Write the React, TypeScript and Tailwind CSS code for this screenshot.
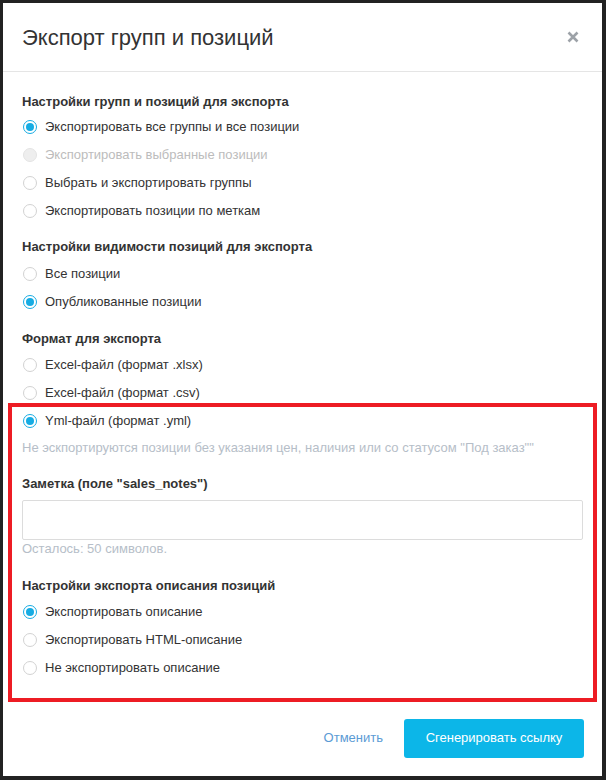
import React from "react";

type RadioProps = { label: string; checked?: boolean; disabled?: boolean };

function Radio({ label, checked, disabled }: RadioProps) {
  return (
    <div className="flex h-[28px] items-center gap-[8px]">
      <span
        className={
          checked
            ? "ml-[1px] flex h-[14px] w-[14px] items-center justify-center rounded-full border-[1.5px] border-[#16ace3] bg-white"
            : disabled
            ? "ml-[1px] h-[14px] w-[14px] rounded-full border border-[#e4e4e4] bg-[#eeeeee]"
            : "ml-[1px] h-[14px] w-[14px] rounded-full border border-[#d2d2d2] bg-white"
        }
      >
        {checked && <span className="h-[8px] w-[8px] rounded-full bg-[#16ace3]" />}
      </span>
      <span className={disabled ? "text-[13px] text-[#bcbcbc]" : "text-[13px] text-[#333333]"}>{label}</span>
    </div>
  );
}

function Heading({ children, className = "" }: { children: React.ReactNode; className?: string }) {
  return (
    <div className={"h-[20px] text-[13px] font-bold leading-[20px] text-[#333333] " + className}>{children}</div>
  );
}

export default function App() {
  return (
    <div
      className="h-[780px] w-[606px] bg-[#222222] pb-[4px] pl-[3px] pr-[4px] pt-[3px]"
      style={{ fontFamily: '"Liberation Sans", Arial, sans-serif' }}
    >
      <div className="flex h-full flex-col bg-white">
        <div className="flex h-[69px] shrink-0 items-center justify-between border-b border-[#e5e5e5] pl-[19px] pr-[23px]">
          <div className="text-[22px] text-[#333333]">Экспорт групп и позиций</div>
          <svg width="12" height="12" viewBox="0 0 12 12">
            <path d="M1.5 1.5 L10.5 10.5 M10.5 1.5 L1.5 10.5" stroke="#9da2a8" strokeWidth="2.6" strokeLinecap="butt" />
          </svg>
        </div>
        <div className="flex flex-col px-[19px] pt-[20px]">
          <Heading className="mb-[1px]">Настройки групп и позиций для экспорта</Heading>
          <Radio label="Экспортировать все группы и все позиции" checked />
          <Radio label="Экспортировать выбранные позиции" disabled />
          <Radio label="Выбрать и экспортировать группы" />
          <Radio label="Экспортировать позиции по меткам" />

          <Heading className="mb-[3px] mt-[12px]">Настройки видимости позиций для экспорта</Heading>
          <Radio label="Все позиции" />
          <Radio label="Опубликованные позиции" checked />

          <Heading className="mb-[2px] mt-[13px]">Формат для экспорта</Heading>
          <Radio label="Excel-файл (формат .xlsx)" />
          <Radio label="Excel-файл (формат .csv)" />

          <div className="-mx-[14px] -mt-[4px] flex flex-col border-4 border-[#ed1c24] pb-[16px] pl-[10px] pr-[10px]">
            <Radio label="Yml-файл (формат .yml)" checked />
            <div className="mt-[4px] h-[18px] text-[13px] leading-[18px] text-[#b6bec8]">
              Не эскпортируются позиции без указания цен, наличия или со статусом "Под заказ""
            </div>
            <Heading className="mt-[17px]">Заметка (поле "sales_notes")</Heading>
            <div className="mt-[6px] h-[40px] rounded-[2px] border border-[#dcdcdc] bg-white" />
            <div className="h-[18px] text-[13px] leading-[18px] text-[#b6bec8]">Осталось: 50 символов.</div>
            <Heading className="mb-[2px] mt-[18px]">Настройки экспорта описания позиций</Heading>
            <Radio label="Экспортировать описание" checked />
            <Radio label="Экспортировать HTML-описание" />
            <Radio label="Не экспортировать описание" />
          </div>
        </div>
        <div className="flex flex-1 items-center justify-end gap-[21px] pb-[2px] pr-[18px]">
          <span className="text-[13px] text-[#5b9bd5]">Отменить</span>
          <div className="flex h-[39px] w-[180px] items-center justify-center rounded-[3px] bg-[#0cb6e8] text-[13px] text-white">
            Сгенерировать ссылку
          </div>
        </div>
      </div>
    </div>
  );
}
